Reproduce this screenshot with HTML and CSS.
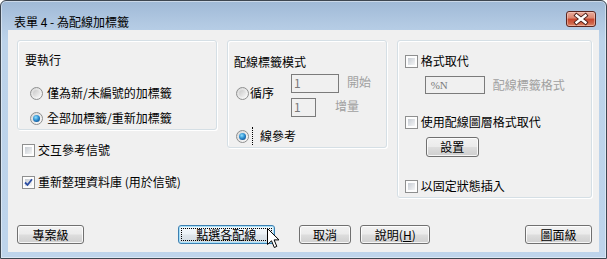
FILE: index.html
```html
<!DOCTYPE html>
<html lang="zh-Hant">
<head>
<meta charset="utf-8">
<title>表單 4 - 為配線加標籤</title>
<link rel="stylesheet" href="styles.css">
</head>
<body>
<div class="window">
  <div class="titlebar">
    <span class="title">表單 4 - 為配線加標籤</span>
    <span class="close">
      <svg width="28" height="14" viewBox="0 0 28 14">
        <path d="M9.5 3.5 L18.5 10.5 M18.5 3.5 L9.5 10.5" stroke="#4a1e18" stroke-width="4.2" stroke-linecap="square" fill="none"/>
        <path d="M9.5 3.5 L18.5 10.5 M18.5 3.5 L9.5 10.5" stroke="#ffffff" stroke-width="2.4" stroke-linecap="square" fill="none"/>
      </svg>
    </span>
  </div>
  <div class="client">
    <div class="panels">
      <div class="col-left">
        <div class="group g1">
          <div class="heading">要執行</div>
          <div class="opt r1"><span class="radio"></span><span>僅為新/未編號的加標籤</span></div>
          <div class="opt r2"><span class="radio checked"></span><span>全部加標籤/重新加標籤</span></div>
        </div>
        <div class="opt c1"><span class="check"></span><span>交互參考信號</span></div>
        <div class="opt c2"><span class="check checked"><svg width="9" height="9" viewBox="0 0 9 9"><path d="M1 4.5 L3.5 7 L8 1.2" stroke="#2b4da3" stroke-width="1.8" fill="none"/></svg></span><span>重新整理資料庫 (用於信號)</span></div>
      </div>

      <div class="group g2">
        <div class="heading">配線標籤模式</div>
        <div class="seq">
          <div class="opt seq-opt"><span class="radio"></span><span>循序</span></div>
          <div class="seq-fields">
            <div class="field-row"><span class="input w48">1</span><span class="dis lbl-start">開始</span></div>
            <div class="field-row f2"><span class="input w25">1</span><span class="dis lbl-inc">增量</span></div>
          </div>
        </div>
        <div class="opt ref"><span class="radio checked"></span><span class="focus-line"></span><span>線參考</span></div>
      </div>

      <div class="group g3">
        <div class="opt k1"><span class="check"></span><span>格式取代</span></div>
        <div class="field-row fmt"><span class="input w60 pct">%N</span><span class="dis lbl-fmt">配線標籤格式</span></div>
        <div class="opt k2"><span class="check"></span><span>使用配線圖層格式取代</span></div>
        <div class="btn set">設置</div>
        <div class="opt k3"><span class="check"></span><span>以固定狀態插入</span></div>
      </div>
    </div>

    <div class="buttons">
      <div class="btn b-proj">專案級</div>
      <div class="btn b-pick focused"><span class="focus-rect">點選各配線</span></div>
      <div class="btn b-cancel">取消</div>
      <div class="btn b-help">說明(<u>H</u>)</div>
      <div class="btn b-draw">圖面級</div>
    </div>
  </div>
  <svg class="cursor" width="13" height="21" viewBox="0 0 13 21">
    <path d="M0.5 0.5 L0.5 16.5 L4.5 12.8 L7.3 19.5 L9.8 18.4 L7.1 11.9 L12 11.9 Z" fill="#ffffff" stroke="#000000" stroke-width="1" stroke-linejoin="miter"/>
  </svg>
</div>
</body>
</html>
```

FILE: styles.css
```css
* { box-sizing: border-box; }

html, body {
  margin: 0;
  padding: 0;
  background: #ffffff;
}

body {
  font-family: "Noto Sans CJK TC", "Noto Sans", sans-serif;
  font-size: 12px;
  color: #000;
}

.window {
  position: relative;
  width: 607px;
  height: 259px;
  border: 1px solid #3d4650;
  border-radius: 6px 6px 0 0;
  padding: 0 7px 6px 7px;
  background: linear-gradient(to bottom, #9fb9d6 0px, #b3cae3 24px, #bcd3ea 40px, #bed4eb 100%);
  box-shadow: inset 0 0 0 1px rgba(255,255,255,0.45);
}

.titlebar {
  height: 29px;
  display: flex;
  align-items: flex-start;
  justify-content: space-between;
  padding: 10px 3px 0 6px;
}

.title {
  margin-top: 3px;
  line-height: 16px;
  font-size: 12px;
  color: #000;
}

.close {
  width: 30px;
  height: 16px;
  border: 1px solid #5b2620;
  border-radius: 3px;
  background: linear-gradient(to bottom, #e9ab9c 0%, #dc8872 42%, #c8462e 52%, #cf6448 80%, #e08a6c 100%);
  box-shadow: inset 0 0 0 1px rgba(255,220,210,0.45);
  display: flex;
  align-items: center;
  justify-content: center;
}

.client {
  height: 222px;
  background: #f0f0f0;
  padding: 10px 7px 0 9px;
}

.panels {
  display: flex;
  align-items: flex-start;
  gap: 10px;
}

.group {
  border: 1px solid #d5dfe5;
  border-radius: 3px;
  box-shadow: inset 1px 1px 0 #ffffff, 1px 1px 0 #ffffff;
}

.col-left { width: 200px; }

.g1 {
  width: 200px;
  height: 90px;
  padding: 10px 0 0 7px;
}

.heading { line-height: 18px; height: 18px; }

.opt {
  display: flex;
  align-items: center;
  height: 18px;
  line-height: 18px;
  white-space: nowrap;
}

.g1 .r1 { margin-top: 15px; }
.g1 .r2 { margin-top: 7px; }

.radio {
  position: relative;
  flex: none;
  width: 13px;
  height: 13px;
  border-radius: 50%;
  border: 1px solid #8e8f8f;
  background: linear-gradient(135deg, #d8d8d8, #fbfbfb);
  margin-right: 4px;
}
.radio::after {
  content: "";
  position: absolute;
  left: 2px; top: 2px; right: 2px; bottom: 2px;
  border-radius: 50%;
  background: linear-gradient(135deg, #c9c9c9, #f4f4f4);
}
.radio.checked::after {
  background: radial-gradient(circle at 40% 35%, #8fe0ff 0%, #2f8fd0 45%, #0c4a8c 85%);
}

.check {
  position: relative;
  flex: none;
  width: 13px;
  height: 13px;
  border: 1px solid #8e8f8f;
  background: #fdfdfd;
  margin-right: 3px;
}
.check::after {
  content: "";
  position: absolute;
  left: 2px; top: 2px; right: 2px; bottom: 2px;
  background: linear-gradient(135deg, #c7ccd3, #f4f5f6);
}
.check svg {
  position: absolute;
  left: 1px; top: 1px;
  z-index: 1;
}

.col-left .opt { padding-left: 5px; }
.col-left .c1 { margin-top: 11px; }
.col-left .c2 { margin-top: 14px; }

.g2 {
  width: 161px;
  height: 108px;
  padding: 12px 0 0 6px;
}

.seq {
  display: flex;
  align-items: flex-start;
  margin-top: 3px;
}

.seq-opt {
  width: 57px;
  padding-left: 2px;
  margin-top: 10px;
}
.seq-opt .radio { margin-right: 1px; }

.field-row {
  display: flex;
  align-items: center;
  height: 19px;
}
.f2 { margin-top: 5px; }

.input {
  height: 19px;
  border: 1px solid #7b7b7b;
  background: #f0f0f0;
  color: #7a7a7a;
  line-height: 16px;
  padding-left: 2px;
  font-size: 12px;
}
.w48 { width: 48px; }
.w25 { width: 25px; }
.w60 { width: 60px; height: 18px; }
.pct { font-family: "Liberation Serif", serif; font-size: 11px; padding-left: 5px; }

.dis { color: #a0a0a0; line-height: 18px; white-space: nowrap; }
.lbl-start { margin-left: 8px; margin-top: -3px; }
.lbl-inc { margin-left: 19px; margin-top: -4px; }

.ref {
  margin-top: 10px;
  padding-left: 2px;
}
.ref .radio { margin-right: 3px; }
.focus-line {
  width: 0;
  height: 18px;
  border-left: 1px dotted #000;
  margin-right: 7px;
}

.g3 {
  width: 197px;
  height: 158px;
  padding: 11px 0 0 7px;
}

.fmt { margin-top: 6px; margin-left: 20px; height: 18px; }
.lbl-fmt { margin-left: 8px; }
.g3 .k2 { margin-top: 19px; }
.g3 .set { margin-top: 6px; margin-left: 21px; width: 53px; height: 20px; }
.g3 .k3 { margin-top: 20px; }

.btn {
  display: flex;
  align-items: center;
  justify-content: center;
  height: 19px;
  border: 1px solid #707070;
  border-radius: 3px;
  background: linear-gradient(to bottom, #f2f2f2 0%, #ebebeb 48%, #dddddd 52%, #cfcfcf 100%);
  box-shadow: inset 0 0 0 1px rgba(255,255,255,0.8);
  font-size: 12px;
  line-height: 16px;
  white-space: nowrap;
}

.btn u { text-decoration: underline; text-underline-offset: 1px; }

.buttons {
  display: flex;
  margin-top: 27px;
}

.b-proj { width: 67px; }
.b-pick { width: 97px; margin-left: 94px; }
.b-cancel { width: 53px; margin-left: 24px; }
.b-help { width: 70px; margin-left: 9px; }
.b-draw { width: 67px; margin-left: 95px; }

.focused {
  border-color: #3c7fb1;
  background: linear-gradient(to bottom, #f4f8fb 0%, #ebf1f6 48%, #dfe6ec 52%, #d2dbe3 100%);
  box-shadow: inset 0 0 0 1px #a6e0f9;
  padding: 2px;
}
.focus-rect {
  width: 100%;
  height: 100%;
  border: 1px dotted #000;
  display: flex;
  align-items: center;
  justify-content: center;
}

.cursor {
  position: absolute;
  left: 266px;
  top: 227px;
}
```
